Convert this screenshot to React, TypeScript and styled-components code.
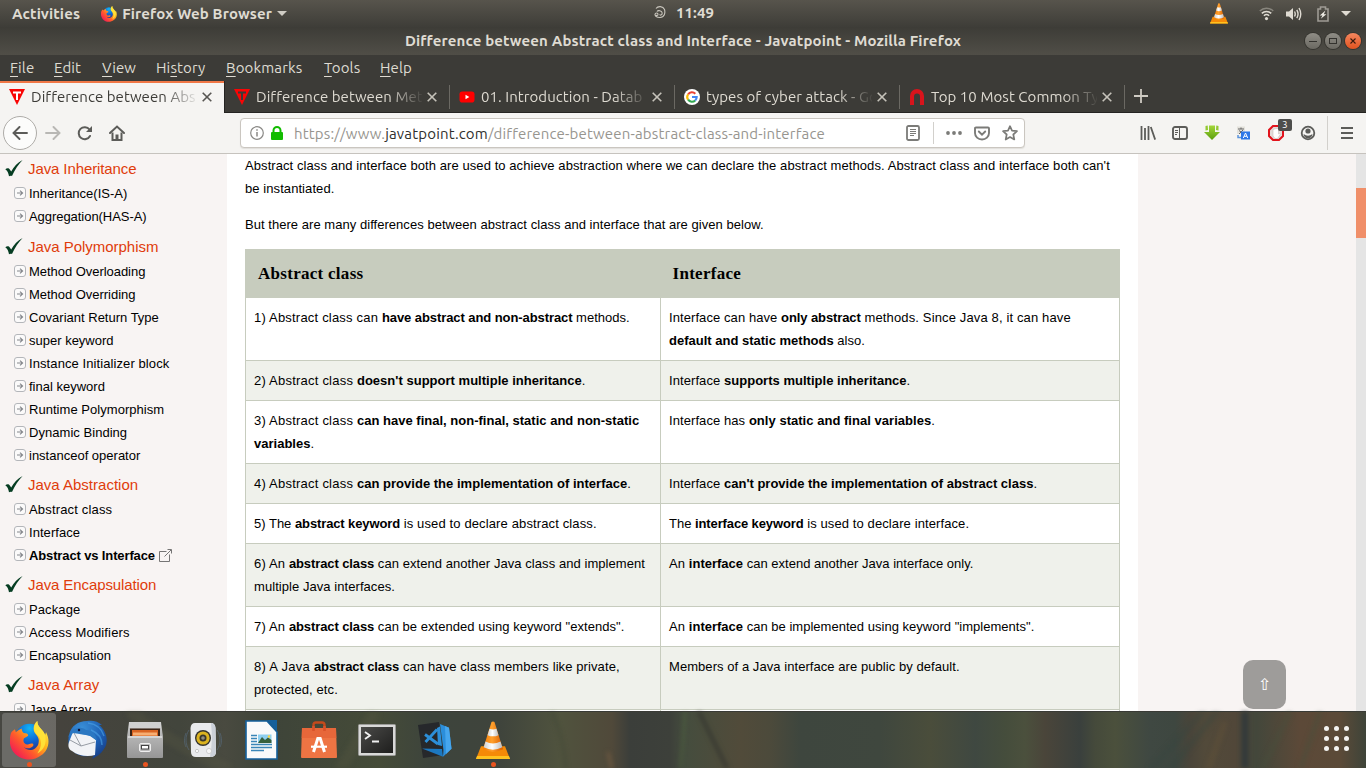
import React from 'react';
import styled, { createGlobalStyle } from 'styled-components';

const GlobalStyle = createGlobalStyle`
  * { box-sizing: border-box; }
  html, body { margin: 0; padding: 0; }
  body { width: 1366px; height: 768px; overflow: hidden; background: #3c3b37; }
`;

const ui = `'Ubuntu', 'Noto Sans', 'Open Sans', sans-serif`;
const sans = `'Liberation Sans', Arial, sans-serif`;

const Screen = styled.div`
  width: 1366px;
  height: 768px;
  display: flex;
  flex-direction: column;
  overflow: hidden;
  font-family: ${ui};
  font-size: 15px;
  letter-spacing: 0.14px;
`;

const Text = styled.span`
  white-space: nowrap;
`;

/* ---------- desktop panel ---------- */

const Panel = styled.header`
  height: 27px;
  flex: none;
  display: grid;
  grid-template-columns: 1fr auto 1fr;
  align-items: center;
  color: #dfdbd2;
  font-weight: 600;
  background: linear-gradient(#57544c, #3e3d38);
`;
const PanelLeft = styled.div`
  display: flex;
  align-items: center;
  padding-left: 12px;
  height: 27px;
`;
const AppMenu = styled.div`
  display: flex;
  align-items: center;
  margin-left: 21px;
  gap: 5px;
`;
const Clock = styled.div`
  display: flex;
  align-items: center;
  gap: 10px;
  height: 22px;
  padding-left: 2px;
  margin-top: -3px;
`;
const Tray = styled.div`
  display: flex;
  align-items: center;
  justify-content: flex-end;
  gap: 12px;
  padding-right: 15px;
  svg { flex: none; }
`;
const TrayApp = styled.span`
  display: flex;
  margin-right: 19px;
`;

/* ---------- window title and menu ---------- */

const TitleBar = styled.div`
  height: 28px;
  flex: none;
  display: grid;
  grid-template-columns: 1fr auto 1fr;
  align-items: center;
  color: #dfdbd2;
  font-weight: 700;
  background: linear-gradient(#3d3c37, #504e47);
`;
const Title = styled.h1`
  margin: 0;
  padding-bottom: 2px;
  font: inherit;
  white-space: nowrap;
`;
const WindowButtons = styled.div`
  display: flex;
  justify-content: flex-end;
  gap: 4px;
  padding-right: 5px;
`;
const WindowButton = styled.span<{ $close?: boolean }>`
  width: 16px;
  height: 16px;
  border-radius: 50%;
  display: grid;
  place-items: center;
  background: ${p => (p.$close ? 'linear-gradient(#f5875f, #e2531f)' : 'linear-gradient(#8f8d86, #6b6962)')};
  box-shadow: 0 0 0 1px #35342f;
`;
const MenuBar = styled.nav`
  height: 26px;
  flex: none;
  display: flex;
  align-items: center;
  padding: 0 0 2px 10px;
  background: #3c3b37;
  color: #dfdbd2;
`;
const MenuItem = styled.span<{ $w: number }>`
  width: ${p => p.$w}px;
  u { text-underline-offset: 3px; text-decoration-thickness: 1px; }
`;

/* ---------- tabs ---------- */

const TabStrip = styled.div`
  height: 32px;
  flex: none;
  display: flex;
  background: #3c3b37;
`;
const Tab = styled.div<{ $active?: boolean }>`
  width: 225px;
  height: 32px;
  display: flex;
  align-items: center;
  padding: 0 0 2px 9px;
  position: relative;
  color: ${p => (p.$active ? '#3c3b37' : '#dfdbd2')};
  background: ${p => (p.$active ? '#f5f4f2' : 'transparent')};
  border-top: 2px solid ${p => (p.$active ? '#f07746' : 'transparent')};
  border-bottom: 1px solid ${p => (p.$active ? '#f5f4f2' : '#252422')};
  &::after {
    content: '';
    position: absolute;
    right: 0;
    top: ${p => (p.$active ? -2 : 2)}px;
    width: 1px;
    height: ${p => (p.$active ? 32 : 24)}px;
    background: ${p => (p.$active ? '#252422' : '#6b6963')};
  }
  &:nth-child(2)::after { background: #6b6963; }
`;
const TabIcon = styled.span`
  width: 16px;
  height: 16px;
  flex: none;
  margin-top: 1px;
  svg { display: block; }
`;
const TabLabel = styled.span`
  width: 166px;
  margin-left: 6px;
  white-space: nowrap;
  letter-spacing: 0.06px;
  mask-image: linear-gradient(to right, #000 132px, transparent 168px);
`;
const CloseIcon = styled.svg`
  width: 10px;
  height: 10px;
  margin: 1px 0 0 5px;
  flex: none;
  stroke: currentColor;
  stroke-width: 1.6;
  opacity: 0.85;
`;
const NewTab = styled.div`
  flex: 1;
  border-bottom: 1px solid #252422;
  padding: 8px 0 0 9px;
  svg { display: block; }
`;

/* ---------- toolbar ---------- */

const Toolbar = styled.div`
  height: 41px;
  flex: none;
  display: flex;
  align-items: center;
  background: #f5f4f2;
  border-bottom: 1px solid #c6c3be;
  color: #5c5c59;
  svg { flex: none; }
`;
const BackButton = styled.span`
  width: 34px;
  height: 34px;
  margin-left: 3px;
  border: 1px solid #aeaca8;
  border-radius: 50%;
  background: #fcfcfb;
  display: grid;
  place-items: center;
`;
const NavIcons = styled.div`
  display: flex;
  align-items: center;
  gap: 16px;
  margin-left: 8px;
  width: 195px;
`;
const UrlBar = styled.div`
  width: 785px;
  height: 30px;
  flex: none;
  display: flex;
  align-items: center;
  border: 1px solid #cac6c0;
  border-radius: 4px;
  background: #fff;
  padding-left: 9px;
  color: #97958f;
  box-shadow: 0 1px 1px #e1dfdc;
`;
const SiteInfo = styled.span`
  display: flex;
  align-items: center;
  gap: 7px;
`;
const Url = styled.span`
  margin-left: 11px;
  flex: 1;
  white-space: nowrap;
  letter-spacing: 0.17px;
  b { font-weight: 400; color: #2f2f2d; }
`;
const UrlActions = styled.div`
  display: flex;
  align-items: center;
  padding-right: 6px;
  color: #7b7b78;
`;
const PageActions = styled.div`
  display: flex;
  align-items: center;
  gap: 12px;
`;
const Divider = styled.span<{ $h: number; $l: number; $r: number }>`
  width: 1px;
  height: ${p => p.$h}px;
  margin: 0 ${p => p.$r}px 0 ${p => p.$l}px;
  background: #d2d0cc;
`;
const Extensions = styled.div`
  display: flex;
  align-items: center;
  gap: 16px;
  margin-left: 115px;
`;
const Blocker = styled.span`
  position: relative;
  width: 16px;
  height: 16px;
  svg { display: block; }
`;
const Badge = styled.span`
  position: absolute;
  left: 10px;
  top: -6px;
  width: 14px;
  height: 12px;
  border-radius: 2px;
  background: #4e4e4c;
  color: #fff;
  font-size: 10px;
  line-height: 12px;
  text-align: center;
`;

/* ---------- page ---------- */

const Page = styled.main`
  height: 557px;
  flex: none;
  display: flex;
  overflow: hidden;
  position: relative;
  background: #f8f4f3;
  font-family: ${sans};
  font-size: 13px;
  letter-spacing: 0;
  color: #000;
`;
const Sidebar = styled.aside`
  width: 227px;
  flex: none;
  margin-top: -3px;
`;
const Heading = styled.h3<{ $top: number; $track: number }>`
  margin: 0;
  height: ${p => 24 + p.$top}px;
  padding: ${p => p.$top}px 0 0 5px;
  display: flex;
  align-items: flex-start;
  gap: 5px;
  font-size: 15px;
  line-height: 22px;
  font-weight: 400;
  letter-spacing: ${p => p.$track}px;
  color: #e03c0b;
  svg { flex: none; margin-top: 2px; }
`;
const Item = styled.a<{ $current?: boolean; $track?: number }>`
  height: 23px;
  display: flex;
  align-items: center;
  padding-left: 14px;
  gap: 3px;
  letter-spacing: ${p => p.$track ?? 0}px;
  font-weight: ${p => (p.$current ? 700 : 400)};
  svg { flex: none; margin-bottom: 1px; }
  svg + svg { margin-left: 1px; }
`;
const Article = styled.article`
  width: 911px;
  flex: none;
  background: #fff;
  padding-left: 18px;
`;
const Paragraph = styled.p<{ $track: number }>`
  margin: 0 0 13px;
  width: 875px;
  line-height: 23px;
  letter-spacing: ${p => p.$track}px;
`;
const Table = styled.table`
  width: 874px;
  table-layout: fixed;
  border-collapse: collapse;
  border: 1px solid #c7ccbe;
`;
const Th = styled.th<{ $w: number }>`
  width: ${p => p.$w}px;
  height: 48px;
  padding: 0 12px;
  background: #c7ccbe;
  text-align: left;
  font: bold 17px 'Liberation Serif', 'Times New Roman', serif;
  letter-spacing: 0.28px;
`;
const Row = styled.tr`
  &:nth-child(even) { background: #eff1eb; }
`;
const Td = styled.td`
  border: 1px solid #c7ccbe;
  padding: 8px 8px;
  height: 40px;
  line-height: 23px;
  vertical-align: top;
`;
const Run = styled.span<{ $t: number }>`
  letter-spacing: ${p => p.$t}px;
`;
const ScrollTrack = styled.div`
  width: 10px;
  margin-left: auto;
  padding-top: 34px;
  background: #e5e5e5;
`;
const ScrollThumb = styled.div`
  height: 50px;
  background: #f08f69;
`;
const ToTop = styled.button`
  position: absolute;
  left: 1243px;
  top: 506px;
  width: 43px;
  height: 49px;
  border: 0;
  padding: 0;
  border-radius: 10px;
  background: #9e9c9a;
  color: #fff;
  font: 16px 'DejaVu Sans', sans-serif;
`;

/* ---------- dock ---------- */

const Dock = styled.footer`
  height: 57px;
  flex: none;
  display: flex;
  align-items: flex-start;
  padding: 1px 16px 0 2px;
  gap: 4px;
  position: relative;
  border-top: 1px solid #393a35;
  background: linear-gradient(90deg, #474742 0, #45433d 60px, #42453c 180px, #494a40 225px, #3e4439 270px,
    #454b38 380px, #3d443c 430px, #3f443c 500px, #50533e 560px, #50493a 612px, #3b3e3a 630px, #3d403a 670px,
    #454d3e 685px, #514b3a 740px, #4c4a3b 770px, #3e463e 800px, #3f473e 880px, #4a4d3b 930px, #3f4841 975px,
    #454d3c 1005px, #4b503d 1025px, #4a453a 1045px, #3a403d 1080px, #454a3b 1095px, #4b503c 1115px,
    #3f4842 1150px, #3e4740 1175px, #4a453a 1190px, #524a3a 1205px, #514739 1235px, #43473b 1256px,
    #5c4938 1300px, #5b4a38 1340px, #3e4439 1366px);
`;
const Stems = styled.svg`
  position: absolute;
  left: 0;
  top: 0;
  filter: blur(2px);
`;
const DockItem = styled.div<{ $focused?: boolean }>`
  width: 54px;
  height: 54px;
  flex: none;
  display: flex;
  align-items: center;
  justify-content: center;
  position: relative;
  border-radius: 3px;
  background: ${p => (p.$focused ? 'rgba(255,255,255,0.2)' : 'transparent')};
`;
const RunningDot = styled.span`
  position: absolute;
  left: 25px;
  bottom: 0;
  width: 5px;
  height: 5px;
  border-radius: 50%;
  background: #e95420;
`;
const AppsGrid = styled.div`
  position: relative;
  margin: 13px 1px 0 auto;
  display: grid;
  grid-template-columns: repeat(3, 5px);
  gap: 5px;
  i { width: 5px; height: 5px; border-radius: 50%; background: #f4f3f1; }
`;

/* ---------- drawings ---------- */

const Firefox = ({ size, id }: { size: number; id: string }) => (
  <svg width={size} height={size} viewBox="0 0 40 42" preserveAspectRatio="none">
    <defs>
      <linearGradient id={`${id}f`} x1="0.9" y1="0.1" x2="0.1" y2="0.9">
        <stop offset="0" stopColor="#fff14a" />
        <stop offset="0.35" stopColor="#ffb31a" />
        <stop offset="0.65" stopColor="#ff5a2c" />
        <stop offset="1" stopColor="#f0145a" />
      </linearGradient>
      <radialGradient id={`${id}b`} cx="0.5" cy="0.15" r="0.8">
        <stop offset="0" stopColor="#12b4f5" />
        <stop offset="0.55" stopColor="#0f62d0" />
        <stop offset="1" stopColor="#2b2a7c" />
      </radialGradient>
    </defs>
    <ellipse cx="20" cy="19.5" rx="15" ry="16.5" fill={`url(#${id}b)`} />
    <path d="M1 13 C2 11 4 10 5 9 L6 12 C8 10 10 9 12 8 C12 10 13 12 14 13 C17 13 19 14 18.5 16 C17 18 14 18 14 20 C13 23 16 26 19 25 C22 24 24 24 24 26 C22 30 17 30 14 28 C19 34 27 31 29 25 C31 18 27 15 25 12 C23 7 25 3 28 0 C28 7 34 9 36 15 L37 12 C42 22 39 32 32 37 C24 44 11 43 4 34 C-1 27 -1 20 1 13 Z" fill={`url(#${id}f)`} />
    <path d="M28 0 C28 7 34 9 36 15 C38 24 35 31 28 35 C33 27 33 20 28 15 C23 11 24 4 28 0 Z" fill="#ffe43a" opacity="0.9" />
  </svg>
);

const Cone = ({ w, h, id }: { w: number; h: number; id: string }) => (
  <svg width={w} height={h} viewBox="0 0 34 40" preserveAspectRatio="none">
    <defs>
      <linearGradient id={id}>
        <stop offset="0" stopColor="#f57a00" />
        <stop offset="0.45" stopColor="#ffa02d" />
        <stop offset="1" stopColor="#d85c00" />
      </linearGradient>
      <linearGradient id={`${id}w`}>
        <stop offset="0" stopColor="#cfcfcf" />
        <stop offset="0.45" stopColor="#fff" />
        <stop offset="1" stopColor="#bdbdbd" />
      </linearGradient>
    </defs>
    <path d="M5 26 H29 L34 39 H0 Z" fill="#f58a07" />
    <path d="M1 36 H33 L34 39 H0 Z" fill="#ffc21f" />
    <path d="M15.5 1 Q17 0 18.5 1 L27 29 Q17 34 7 29 Z" fill={`url(#${id})`} />
    <path d="M13.5 8 Q17 9.5 20.5 8 L22.500 14.5 Q17 17 11.5 14.5 Z" fill={`url(#${id}w)`} />
    <path d="M9.5 21 Q17 25 24.5 21 L26.3 27 Q17 32 7.700 27 Z" fill={`url(#${id}w)`} />
  </svg>
);

const JavatpointIcon = ({ dark }: { dark?: boolean }) => (
  <svg width="16" height="16" viewBox="0 0 16 16">
    <path d="M0 0 H16 L8 16 Z" fill="#f90505" />
    <path d="M4 2.5 H12 V4.500 H9 V11 H7 V4.500 H4 Z" fill={dark ? '#3c3b37' : '#fff'} />
  </svg>
);
const YoutubeIcon = () => (
  <svg width="16" height="16" viewBox="0 0 16 16">
    <rect x="0.5" y="2.5" width="15" height="11" rx="2.8" fill="#f00" />
    <path d="M6.5 5.8 V10.2 L10.3 8 Z" fill="#fff" />
  </svg>
);
const GoogleIcon = () => (
  <svg width="16" height="16" viewBox="0 0 16 16" fill="none" strokeWidth="2.1">
    <circle cx="8" cy="8" r="8" fill="#fff" />
    <path d="M4.1 5.3 A4.7 4.7 0 0 1 11.3 4.7" stroke="#ea4335" />
    <path d="M4.1 10.7 A4.7 4.7 0 0 1 4.1 5.3" stroke="#fbbc05" />
    <path d="M11.2 11.4 A4.7 4.7 0 0 1 4.1 10.7" stroke="#34a853" />
    <path d="M8 8 H12.7 A4.7 4.7 0 0 1 11.2 11.4" stroke="#4285f4" />
  </svg>
);
const ArchIcon = () => (
  <svg width="16" height="16" viewBox="0 0 16 16">
    <path d="M1 16 V7 A7 7 0 0 1 15 7 V16 H11 V7.5 A3 3 0 0 0 5 7.5 V16 Z" fill="#d8141c" />
  </svg>
);

const Close = () => (
  <CloseIcon viewBox="0 0 10 10">
    <path d="M0.7 0.7 L9.3 9.3 M9.3 0.7 L0.7 9.3" />
  </CloseIcon>
);

const Check = () => (
  <svg width="18" height="18" viewBox="0 0 18 18">
    <path d="M0.3 9.3 C2 7.8 4 8 4.8 9.6 L6.200 11.6 C8.5 7 12.5 2.600 17.6 0 C13.4 4.400 9.8 9.6 7 16 C6 15.6 4.7 15.900 4 16.300 C3.4 13.400 2.4 10.400 0.3 9.3 Z" fill="#063d22" />
  </svg>
);
const Bullet = () => (
  <svg width="12" height="12" viewBox="0 0 12 12" fill="none">
    <rect x="0.5" y="0.5" width="11" height="11" rx="2.5" fill="#fbfafa" stroke="#b4b6ba" />
    <path d="M3 6 H8 M6 3.6 L8.6 6 L6 8.4" stroke="#85878c" strokeWidth="1.1" />
  </svg>
);
const External = () => (
  <svg width="13" height="13" viewBox="0 0 13 13" fill="none" stroke="#666" strokeWidth="0.9">
    <path d="M7.5 2.5 H0.5 V12.5 H10.5 V5.5 M5.5 7.5 L12 1 M8.5 0.5 H12.5 V4.5" />
  </svg>
);

const Thunderbird = () => (
  <svg width="42" height="40" viewBox="0 0 42 40">
    <defs>
      <radialGradient id="tb" cx="0.35" cy="0.2" r="0.9">
        <stop offset="0" stopColor="#3a90d8" />
        <stop offset="0.6" stopColor="#1d5fb4" />
        <stop offset="1" stopColor="#173a80" />
      </radialGradient>
    </defs>
    <path d="M3 15 C5 6 12 1 21 1 C26 0 32 1 36 5 L33 5 C41 11 43 22 38 29 C35 34 30 37 26 39 L28 35 C20 38 10 36 5 29 C2 25 2 20 3 15 Z" fill="url(#tb)" />
    <path d="M22 3 C30 4 36 9 38 16 M25 10 C32 13 36 18 36 25" stroke="#4da3e6" fill="none" strokeWidth="1.5" opacity="0.6" />
    <path d="M3 22 L7 12 L24 16 L30 20 L29 35 C22 37 12 36 6 31 C2 29 2 25 3 22 Z" fill="#f1f3f6" />
    <path d="M4 20 L15 26 L29 22 M15 26 L8 13" stroke="#8b929b" fill="none" strokeWidth="0.9" />
    <path d="M2 17 C6 9 14 5 20 10 C26 10 30 14 31 21 L25 16 C18 14 11 14 7 13 Z" fill="#2b78c2" />
    <circle cx="13" cy="10" r="1.2" fill="#113" />
  </svg>
);
const Files = () => (
  <svg width="36" height="38" viewBox="0 0 36 38">
    <defs>
      <linearGradient id="fl" x2="0" y2="1"><stop stopColor="#c9c9c9" /><stop offset="1" stopColor="#969696" /></linearGradient>
    </defs>
    <path d="M2 1 H34 L36 16 V36 Q36 37 35 37 H1 Q0 37 0 36 V16 Z" fill="url(#fl)" />
    <path d="M2 1 H34 V7 H2 Z" fill="#d0d0d0" />
    <rect x="3" y="7.5" width="30" height="8.5" fill="#3c2517" />
    <rect x="5" y="9" width="26" height="7" fill="#d96422" />
    <rect x="6" y="11.5" width="24" height="3" fill="#f7ae72" />
    <path d="M1 15 H35 V17 H1 Z" fill="#d4d4d4" />
    <rect x="12.5" y="22.5" width="11" height="8" rx="1.5" fill="#bbb" stroke="#eee" />
    <rect x="14.5" y="24.5" width="7" height="3.5" fill="#fff" stroke="#444" />
  </svg>
);
const Rhythmbox = () => (
  <svg width="40" height="38" viewBox="0 0 40 38">
    <path d="M6 9 C2 15 2 23 6 29 M34 9 C38 15 38 23 34 29 M3 12 C1 17 1 22 3 26 M37 12 C39 17 39 22 37 26" stroke="#5d7897" fill="none" opacity="0.45" />
    <path d="M12 2 H28 Q32 2 32.5 7 L33 31 Q33 36 27 36 H13 Q8 36 8 31 L7.5 7 Q8 2 12 2 Z" fill="#e9eaec" />
    <path d="M28 2 Q32 2 32.5 7 L33 31 Q33 36 27 36 Q30 20 28 2 Z" fill="#cbd0d8" />
    <circle cx="20" cy="17" r="8" fill="#34342f" />
    <circle cx="20" cy="17" r="6.6" fill="#dbb320" />
    <circle cx="20" cy="17" r="3.5" fill="#39362b" />
    <circle cx="20" cy="17" r="1.8" fill="#8e8c80" />
    <circle cx="14" cy="30" r="1.6" fill="#fff" stroke="#aaa" strokeWidth="0.6" />
    <circle cx="26" cy="30" r="2.6" fill="#f6f6f6" stroke="#bbb" strokeWidth="0.6" />
  </svg>
);
const Writer = () => (
  <svg width="33" height="40" viewBox="0 0 33 40">
    <path d="M1 1 H22 L32 12 V39 H1 Z" fill="#fafafa" stroke="#15609c" strokeWidth="1.6" />
    <path d="M22 0 H32 V11 Z" fill="#15609c" />
    <path d="M6 15.5 H12 M6 18.5 H12 M6 21.5 H12 M6 24.5 H27 M6 27.5 H27 M6 30.5 H19" stroke="#3b86b8" strokeWidth="1.4" />
    <rect x="13" y="14.5" width="13.5" height="8.5" fill="#8fd0f0" />
    <path d="M13 23 L17 17 L20 20 L23 17.5 L26.5 20 V23 Z" fill="#38603d" />
    <circle cx="24" cy="16.5" r="1.2" fill="#ffd63b" />
  </svg>
);
const Software = () => (
  <svg width="36" height="40" viewBox="0 0 36 40">
    <path d="M12.5 13 V5 Q12.5 2.5 15 2.5 H21 Q23.5 2.5 23.5 5 V13" fill="none" stroke="#c44a1c" strokeWidth="2.4" />
    <path d="M1 8 H35 L36 37 Q36 38 35 38 H1 Q0 38 0 37 Z" fill="#ee7443" />
    <path d="M1 8 H35 L35.3 18 H0.7 Z" fill="#e7673a" />
    <path d="M12.5 6 V11 M23.5 6 V11" stroke="#d9532a" strokeWidth="2.6" />
    <path d="M12.5 32 L16.800 18.5 H19.200 L23.5 32" fill="none" stroke="#fff" strokeWidth="3" />
    <path d="M10 26.7 H26" stroke="#fff" strokeWidth="2.2" />
  </svg>
);
const Terminal = () => (
  <svg width="38" height="32" viewBox="0 0 38 32">
    <defs>
      <linearGradient id="tm" x2="1" y2="1"><stop stopColor="#4a4a48" /><stop offset="1" stopColor="#1e1e1d" /></linearGradient>
    </defs>
    <rect x="0.5" y="0.5" width="37" height="31" rx="1" fill="#d9d9d8" stroke="#9b9b99" />
    <rect x="3" y="3" width="32" height="26" fill="url(#tm)" />
    <path d="M7 8 L12 11.5 L7 15 M14 17.5 H21" fill="none" stroke="#f0f0f0" strokeWidth="1.8" />
  </svg>
);
const VsCode = () => (
  <svg width="36" height="38" viewBox="0 0 36 38">
    <path d="M1 4 L22 1 L27 34 L6 37 Z" fill="#26282b" />
    <path d="M5 27.5 L25 28 L26 35.7 Z" fill="#1c78c0" />
    <path d="M23 3 L32 6.7 L34.5 27.7 L26 35.7 L26.5 29 Z" fill="#2b8edb" />
    <path d="M28 5 L32 6.7 L34.5 27.7 L29 33 Z" fill="#46a6ee" />
    <path d="M8 13.5 L21 23 M8.5 21 L20 8.5" fill="none" stroke="#2c8fd9" strokeWidth="2.8" />
    <path d="M20 7 L23 5.5 L25 25 L21 24 Z" fill="#2c8fd9" />
  </svg>
);

const tabs = [
  { label: 'Difference between Abs', icon: <JavatpointIcon />, active: true },
  { label: 'Difference between Met', icon: <JavatpointIcon dark /> },
  { label: '01. Introduction - Datab', icon: <YoutubeIcon /> },
  { label: 'types of cyber attack - Go', icon: <GoogleIcon /> },
  { label: 'Top 10 Most Common Ty', icon: <ArchIcon /> },
];

const menu = [
  { k: 'File', i: 0, w: 44 },
  { k: 'Edit', i: 0, w: 48 },
  { k: 'View', i: 0, w: 54 },
  { k: 'History', i: 2, w: 70 },
  { k: 'Bookmarks', i: 0, w: 98 },
  { k: 'Tools', i: 0, w: 56 },
  { k: 'Help', i: 0, w: 50 },
];

const groups: { title: string; top: number; track: number; items: [string, number][] }[] = [
  { title: 'Java Inheritance', top: 7, track: -0.1, items: [['Inheritance(IS-A)', 0], ['Aggregation(HAS-A)', -0.05]] },
  {
    title: 'Java Polymorphism',
    top: 8,
    track: -0.03,
    items: [['Method Overloading', -0.04], ['Method Overriding', -0.03], ['Covariant Return Type', 0], ['super keyword', 0],
      ['Instance Initializer block', 0.09], ['final keyword', 0], ['Runtime Polymorphism', 0.04], ['Dynamic Binding', 0.04],
      ['instanceof operator', 0]],
  },
  { title: 'Java Abstraction', top: 7, track: 0, items: [['Abstract class', 0.17], ['Interface', 0.05], ['Abstract vs Interface', -0.13]] },
  { title: 'Java Encapsulation', top: 7, track: -0.1, items: [['Package', 0.1], ['Access Modifiers', 0.15], ['Encapsulation', 0.03]] },
  { title: 'Java Array', top: 7, track: 0.05, items: [['Java Array', 0.1]] },
];

/* Cell text is a list of runs: text, letter spacing, bold. */
type Piece = [string, number, boolean?];
const rows: [Piece[], Piece[]][] = [
  [[['1) Abstract class can ', 0.2], ['have abstract and non-abstract', -0.08, true], [' methods.', 0.02]],
    [['Interface can have ', 0.08], ['only abstract', -0.1, true], [' methods. Since Java 8, it can have ', 0.14], ['default and static methods', 0, true], [' also.', 0]]],
  [[['2) Abstract class ', 0.22], ["doesn't support multiple inheritance", 0.02, true], ['.', 0]],
    [['Interface ', 0.08], ['supports multiple inheritance', 0.02, true], ['.', 0]]],
  [[['3) Abstract class ', 0.22], ['can have final, non-final, static and non-static variables', 0.01, true], ['.', 0]],
    [['Interface has ', 0.08], ['only static and final variables', 0.03, true], ['.', 0]]],
  [[['4) Abstract class ', 0.22], ['can provide the implementation of interface', 0.02, true], ['.', 0]],
    [['Interface ', 0.08], ["can't provide the implementation of abstract class", 0, true], ['.', 0]]],
  [[['5) The ', 0], ['abstract keyword', -0.12, true], [' is used to declare abstract class.', 0.13]],
    [['The ', 0], ['interface keyword', -0.12, true], [' is used to declare interface.', 0.1]]],
  [[['6) An ', 0.15], ['abstract class', -0.1, true], [' can extend another Java class and implement multiple Java interfaces.', 0.06]],
    [['An ', 0.1], ['interface', 0, true], [' can extend another Java interface only.', 0.02]]],
  [[['7) An ', 0.15], ['abstract class', -0.1, true], [' can be extended using keyword "extends".', 0.04]],
    [['An ', 0.1], ['interface', 0, true], [' can be implemented using keyword "implements".', 0.02]]],
  [[['8) A Java ', 0.28], ['abstract class', -0.1, true], [' can have class members like private, protected, etc.', 0.1]],
    [['Members of a Java interface are public by default.', 0.06]]],
  [[], []],
];

const Cell = ({ pieces }: { pieces: Piece[] }) => (
  <Td>
    {pieces.map(([text, t, bold], n) => <Run key={n} as={bold ? 'b' : 'span'} $t={t}>{text}</Run>)}
  </Td>
);

const dock = [
  { icon: <Firefox size={39} id="d" />, running: true, focused: true },
  { icon: <Thunderbird /> },
  { icon: <Files />, running: true },
  { icon: <Rhythmbox /> },
  { icon: <Writer /> },
  { icon: <Software /> },
  { icon: <Terminal /> },
  { icon: <VsCode /> },
  { icon: <Cone w={34} h={39} id="vd" />, running: true },
];

export default function App() {
  return (
    <Screen>
      <GlobalStyle />
      <Panel>
        <PanelLeft>
          <Text>Activities</Text>
          <AppMenu>
            <Firefox size={16} id="p" />
            <Text>Firefox Web Browser</Text>
            <svg width="10" height="5" viewBox="0 0 10 5"><path d="M0 0 H10 L5 5 Z" fill="#cfccc4" /></svg>
          </AppMenu>
        </PanelLeft>
        <Clock>
          <svg width="12" height="13" viewBox="0 0 12 13" fill="none" stroke="#c9c6bd" strokeWidth="1.1">
            <path d="M2 2.5 C4 -0.3 9 0 10.5 3.5 C11.5 7 10.5 11.5 6 11.5 C2.5 11.5 0.8 10 1 8.3 C1.3 6.5 4 6.7 4 8.3 C4 9.8 2.5 9.8 2.2 8.8 M3 5.5 C4 4 8 4.5 8.2 7 C8.2 9.5 6 9.5 5.6 8.4" />
          </svg>
          <Text>11:49</Text>
        </Clock>
        <Tray>
          <TrayApp><Cone w={18} h={21} id="vt" /></TrayApp>
          <svg width="15" height="14" viewBox="0 0 15 14" fill="none" stroke="#dfdbd2" strokeWidth="1.5">
            <path d="M0.8 4 C4.5 0.2 10.5 0.2 14.2 4" opacity="0.4" />
            <path d="M2.8 6.4 C5.4 3.8 9.6 3.8 12.2 6.4 M4.9 8.8 C6.4 7.4 8.6 7.4 10.1 8.8" />
            <circle cx="7.5" cy="11.6" r="1.6" fill="#dfdbd2" stroke="none" />
          </svg>
          <svg width="16" height="14" viewBox="0 0 16 14" fill="none" stroke="#dfdbd2" strokeWidth="1.4">
            <path d="M0 4.5 H3 L7 1 V13 L3 9.5 H0 Z" fill="#dfdbd2" stroke="none" />
            <path d="M8.5 4.5 Q10 7 8.5 9.5 M10.8 2.8 Q13.3 7 10.8 11.2 M13 1 Q16.5 7 13 13" />
          </svg>
          <svg width="15" height="16" viewBox="-3 0 15 16">
            <path d="M1 3 H3.5 V1 H8.5 V3 H11 V15 H1 Z" fill="none" stroke="#9e9b94" strokeWidth="1.6" />
            <path d="M8.5 4.5 L2.8 9.5 H5.5 L3.8 12.8 L9.4 8.2 H6.8 Z" fill="#f0ede6" />
          </svg>
          <svg width="10" height="5" viewBox="0 0 10 5"><path d="M0 0 H10 L5 5 Z" fill="#dfdbd2" /></svg>
        </Tray>
      </Panel>

      <TitleBar>
        <span />
        <Title>Difference between Abstract class and Interface - Javatpoint - Mozilla Firefox</Title>
        <WindowButtons>
          <WindowButton><svg width="8" height="8"><path d="M0 4.5 H8" stroke="#33322e" /></svg></WindowButton>
          <WindowButton><svg width="8" height="8"><rect x="0.5" y="1.5" width="7" height="5" fill="none" stroke="#33322e" /></svg></WindowButton>
          <WindowButton $close><svg width="6" height="6"><path d="M0.5 0.5 L5.5 5.5 M5.5 0.5 L0.5 5.5" stroke="#3b1a0d" strokeWidth="1.1" /></svg></WindowButton>
        </WindowButtons>
      </TitleBar>

      <MenuBar>
        {menu.map(m => (
          <MenuItem key={m.k} $w={m.w}>{m.k.slice(0, m.i)}<u>{m.k[m.i]}</u>{m.k.slice(m.i + 1)}</MenuItem>
        ))}
      </MenuBar>

      <TabStrip>
        {tabs.map(t => (
          <Tab key={t.label} $active={t.active}>
            <TabIcon>{t.icon}</TabIcon>
            <TabLabel>{t.label}</TabLabel>
            <Close />
          </Tab>
        ))}
        <NewTab>
          <svg width="14" height="14"><path d="M7 0 V14 M0 7 H14" stroke="#cfcbc3" strokeWidth="1.8" /></svg>
        </NewTab>
      </TabStrip>

      <Toolbar>
        <BackButton>
          <svg width="16" height="14" viewBox="0 0 16 14" fill="none" stroke="#5c5c59" strokeWidth="1.9">
            <path d="M15 7 H2 M7.5 1 L1.5 7 L7.5 13" strokeLinecap="round" />
          </svg>
        </BackButton>
        <NavIcons>
          <svg width="16" height="14" viewBox="0 0 16 14" fill="none" stroke="#b8b7b4" strokeWidth="1.9">
            <path d="M1 7 H14 M8.5 1 L14.5 7 L8.5 13" strokeLinecap="round" />
          </svg>
          <svg width="16" height="16" viewBox="0 0 16 16" fill="none" stroke="#5c5c59" strokeWidth="2">
            <path d="M13 11 A6 6 0 1 1 12.5 4.5" strokeLinecap="round" />
            <path d="M15 1 V7 H9 Z" fill="#5c5c59" stroke="none" />
          </svg>
          <svg width="16" height="16" viewBox="0 0 16 16" fill="none" stroke="#5c5c59" strokeWidth="2">
            <path d="M1 8 L8 1.5 L15 8" strokeLinecap="round" />
            <path d="M3.5 7.5 V15 H12.5 V7.5" />
            <path d="M6.5 14 V9.5 H9.5 V14 Z" fill="#5c5c59" stroke="none" />
          </svg>
        </NavIcons>
        <UrlBar>
          <SiteInfo>
            <svg width="14" height="14" viewBox="0 0 14 14" fill="none" stroke="#8a8986" strokeWidth="1.2">
              <circle cx="7" cy="7" r="6.3" />
              <path d="M7 6 V10.5 M7 3.3 V4.8" strokeWidth="1.5" />
            </svg>
            <svg width="12" height="14" viewBox="0 0 12 14">
              <path d="M2.5 7 V4.5 A3.5 3.5 0 0 1 9.5 4.5 V7" fill="none" stroke="#12bc00" strokeWidth="2" />
              <rect y="6" width="12" height="8" rx="1" fill="#12bc00" />
            </svg>
          </SiteInfo>
          <Url>https://www.<b>javatpoint.com</b>/difference-between-abstract-class-and-interface</Url>
          <UrlActions>
            <svg width="14" height="16" viewBox="0 0 14 16" fill="none" stroke="currentColor">
              <rect x="1" y="1" width="12" height="14" rx="1.5" strokeWidth="1.8" />
              <path d="M4 4.5 H10 M4 6.5 H10 M4 8.5 H10 M4 10.5 H8" />
            </svg>
            <Divider $h={22} $l={13} $r={12} />
            <PageActions>
              <svg width="16" height="4" viewBox="0 0 16 4" fill="currentColor">
                <circle cx="2" cy="2" r="1.9" /><circle cx="8" cy="2" r="1.9" /><circle cx="14" cy="2" r="1.9" />
              </svg>
              <svg width="16" height="15" viewBox="0 0 16 15" fill="none" stroke="currentColor" strokeWidth="1.9" strokeLinecap="round">
                <path d="M2 1.5 H14 Q15 1.5 15 2.5 V7 A7 6.5 0 0 1 1 7 V2.5 Q1 1.5 2 1.5 Z" />
                <path d="M4.8 5.5 L8 8.6 L11.2 5.5" />
              </svg>
              <svg width="16" height="16" viewBox="0 0 16 16" fill="none" stroke="currentColor" strokeWidth="1.7" strokeLinejoin="round">
                <path d="M8 1.2 L10 5.7 L15 6.2 L11.3 9.5 L12.3 14.5 L8 12 L3.7 14.5 L4.7 9.5 L1 6.2 L6 5.7 Z" />
              </svg>
            </PageActions>
          </UrlActions>
        </UrlBar>
        <Extensions>
          <svg width="16" height="14" viewBox="0 0 16 14" stroke="#5c5c59" strokeWidth="1.8">
            <path d="M1.5 0 V14 M5 2 V14 M8.5 0 V14 M10.8 1 L15.2 13.6" />
          </svg>
          <svg width="16" height="14" viewBox="0 0 16 14" fill="none" stroke="#5c5c59">
            <rect x="1" y="1" width="14" height="12" rx="2" strokeWidth="1.9" />
            <path d="M7.5 1 V13 M3 4.5 H6 M3 6.5 H6 M3 8.5 H5" />
          </svg>
          <svg width="16" height="16" viewBox="0 0 16 16">
            <defs>
              <linearGradient id="dl" x2="0" y2="1"><stop stopColor="#a3d63a" /><stop offset="1" stopColor="#5a9e0c" /></linearGradient>
            </defs>
            <path d="M5 0.5 H11 V7 H16 L8 15 L0 7 H5 Z" fill="url(#dl)" />
            <path d="M1.5 1 L3.7 0.5 L4 5 L1.500 5.500 Z M14.5 1 L12.3 0.5 L12 5 L14.500 5.500 Z" fill="#93c933" />
          </svg>
          <svg width="16" height="16" viewBox="0 0 16 16" fill="none">
            <rect x="1" y="1.5" width="8" height="7.5" fill="#e4e2dc" />
            <path d="M2 4 H8 M5 2.5 V4 M3 5.5 L7 8.5 M7 5 L3 9" stroke="#666" />
            <path d="M2 10 V12.5 H5" stroke="#5c94dc" strokeWidth="1.5" />
            <rect x="5" y="6.5" width="9" height="8" fill="#2f78e8" />
            <path d="M7.3 13 L9.5 8 L11.7 13 M8.2 11.3 H10.8" stroke="#fff" />
          </svg>
          <Blocker>
            <svg width="16" height="16" viewBox="0 0 16 16">
              <path d="M5 1 H11 L15 5 V11 L11 15 H5 L1 11 V5 Z" fill="#e3dcda" stroke="#e2131c" strokeWidth="2" />
              <path d="M5 4.5 V11 L7 13.5 H9.5 L12.5 9 L11.5 8.5 L10.5 9 V3.5 H8 Z" fill="#fff" stroke="#c9c0be" strokeWidth="0.6" />
            </svg>
            <Badge>3</Badge>
          </Blocker>
          <svg width="16" height="16" viewBox="0 0 16 16" fill="none" stroke="#5c5c59">
            <circle cx="8" cy="8" r="6.3" strokeWidth="1.8" />
            <circle cx="8" cy="6" r="2.6" fill="#5c5c59" stroke="none" />
            <path d="M3.5 9 Q8 12.5 12.5 9 Q12 13 8 13.5 Q4 13 3.5 9 Z" fill="#5c5c59" stroke="none" />
          </svg>
        </Extensions>
        <Divider $h={34} $l={11} $r={13} />
        <svg width="12" height="12" viewBox="0 0 12 12"><path d="M0 1 H12 M0 6 H12 M0 11 H12" stroke="#5c5c59" strokeWidth="2" /></svg>
      </Toolbar>

      <Page>
        <Sidebar>
          {groups.map(g => (
            <div key={g.title}>
              <Heading $top={g.top} $track={g.track}><Check />{g.title}</Heading>
              {g.items.map(([name, track]) => {
                const current = name === 'Abstract vs Interface';
                return <Item key={name} $current={current} $track={track}><Bullet />{name}{current && <External />}</Item>;
              })}
            </div>
          ))}
        </Sidebar>
        <Article>
          <Paragraph $track={0.075}>
            Abstract class and interface both are used to achieve abstraction where we can declare the abstract methods. Abstract class and interface both can't be instantiated.
          </Paragraph>
          <Paragraph $track={0.04}>But there are many differences between abstract class and interface that are given below.</Paragraph>
          <Table>
            <thead>
              <tr><Th $w={415}>Abstract class</Th><Th $w={459}>Interface</Th></tr>
            </thead>
            <tbody>
              {rows.map(([a, b], n) => <Row key={n}><Cell pieces={a} /><Cell pieces={b} /></Row>)}
            </tbody>
          </Table>
        </Article>
        <ScrollTrack><ScrollThumb /></ScrollTrack>
        <ToTop>⇧</ToTop>
      </Page>

      <Dock>
        <Stems width="1366" height="56" viewBox="0 0 1366 56" fill="none">
          <path d="M698 -2 L728 58" stroke="#33352f" strokeWidth="4" opacity="0.7" />
          <path d="M685 -2 Q683 30 680 58" stroke="#56703f" strokeWidth="2" opacity="0.5" />
          <path d="M552 0 Q564 25 566 58" stroke="#3d4436" strokeWidth="2" opacity="0.6" />
          <path d="M1218 -2 L1170 58 M1205 -2 L1150 58" stroke="#35443f" strokeWidth="7" opacity="0.3" />
          <path d="M1245 -2 V58" stroke="#31383a" strokeWidth="7" opacity="0.9" />
          <path d="M1225 10 L1208 58" stroke="#6a5638" strokeWidth="6" opacity="0.3" />
          <path d="M1290 0 L1262 58 M1320 0 L1300 58" stroke="#45513c" strokeWidth="5" opacity="0.4" />
          <path d="M130 -2 Q150 20 230 58 M375 0 L340 58" stroke="#5d5a42" strokeWidth="12" opacity="0.25" />
          <path d="M608 40 L612 58" stroke="#7d6044" strokeWidth="3" opacity="0.6" />
        </Stems>
        {dock.map((d, n) => (
          <DockItem key={n} $focused={d.focused}>
            {d.icon}
            {d.running && <RunningDot />}
          </DockItem>
        ))}
        <AppsGrid>{Array.from({ length: 9 }, (_, n) => <i key={n} />)}</AppsGrid>
      </Dock>
    </Screen>
  );
}
